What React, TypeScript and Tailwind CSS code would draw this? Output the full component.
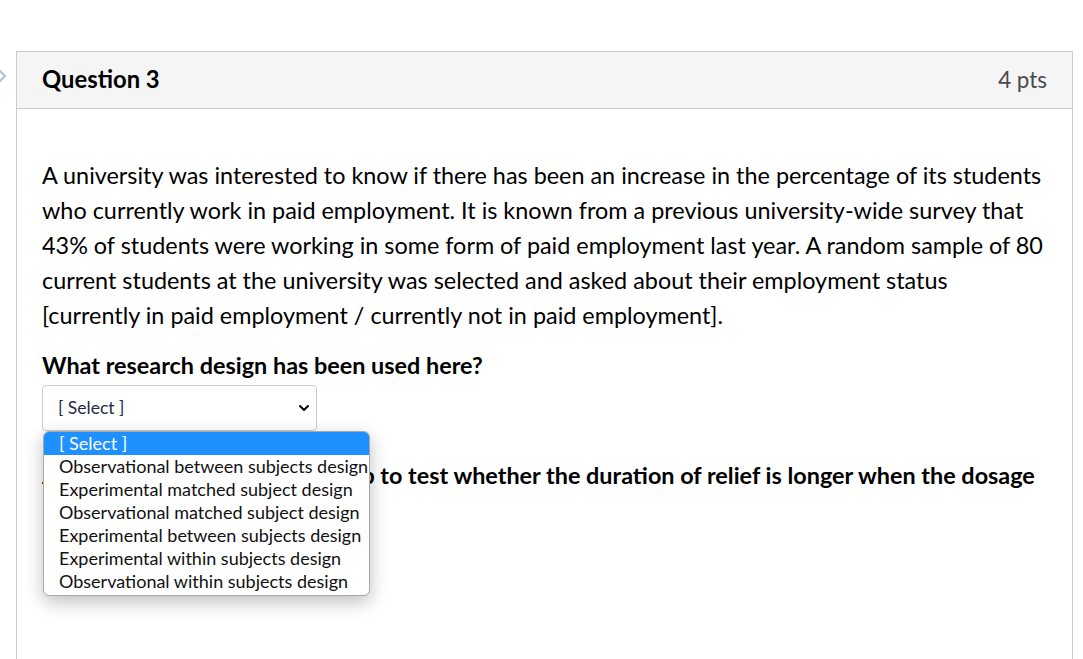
import { ChevronDown } from "lucide-react";

const options = [
    "[ Select ]",
    "Observational between subjects design",
    "Experimental matched subject design",
    "Observational matched subject design",
    "Experimental between subjects design",
    "Experimental within subjects design",
    "Observational within subjects design",
];

export default function App() {
    return (
        <div
            className="relative h-[659px] w-[1083px] overflow-hidden bg-white pt-[51px] text-black"
            style={{ fontFamily: "Lato, 'Liberation Sans', sans-serif" }}>
            <svg
                className="absolute left-[-4px] top-[67px]"
                width="12"
                height="18"
                viewBox="0 0 12 18">
                <path
                    d="M2 2 L9 9 L2 16"
                    fill="none"
                    stroke="#9fc3e0"
                    strokeWidth="2"
                />
            </svg>

            <section className="ml-[16px] h-[700px] w-[1057px] border border-[#c7cdd1]">
                <header className="flex h-[57px] items-center justify-between border-b border-[#c7cdd1] bg-[#f5f5f5] px-[25px]">
                    <h2 className="text-[23.8px] font-bold">Question 3</h2>
                    <span className="text-[22.4px] text-[#4a4a4a]">4 pts</span>
                </header>

                <div className="px-[25px] pt-[49px]">
                    <p className="text-[23.4px] leading-[35px]">
                        A university was interested to know if there has been an
                        increase in the percentage of its students who currently
                        work in paid employment. It is known from a previous
                        university-wide survey that 43% of students were working
                        in some form of paid employment last year. A random
                        sample of 80 current students at the university was
                        selected and asked about their employment status
                        [currently in paid employment / currently not in paid
                        employment].
                    </p>

                    <p className="mt-[15px] text-[23.4px] font-bold leading-[35px]">
                        What research design has been used here?
                    </p>

                    <div className="relative mt-[2px] w-[275px]">
                        <div className="flex h-[46px] items-center justify-between rounded-[4px] border border-[#c7cdd1] bg-white pl-[15px] pr-[4px]">
                            <span className="text-[17.5px] text-[#1c2a4a]">
                                [ Select ]
                            </span>
                            <ChevronDown size={16} strokeWidth={3} />
                        </div>

                        <ul className="absolute left-[1px] top-[46px] z-10 w-[327px] overflow-hidden rounded-[6px] border border-[#a9a9a9] bg-white pb-[2px] text-[18px] leading-[23px] shadow-[0_6px_18px_rgba(0,0,0,0.25)]">
                            {options.map((opt, i) => (
                                <li
                                    key={opt}
                                    className={
                                        i === 0
                                            ? "bg-[#1e90ff] pl-[15px] text-white"
                                            : "whitespace-nowrap pl-[15px] text-[#111]"
                                    }>
                                    {opt}
                                </li>
                            ))}
                        </ul>
                    </div>

                    <p className="mt-[27px] text-[23.4px] font-bold leading-[35px]">
                        A medical drug study was set up to test whether the
                        duration of relief is longer when the dosage is
                        increased.
                    </p>
                </div>
            </section>
        </div>
    );
}
